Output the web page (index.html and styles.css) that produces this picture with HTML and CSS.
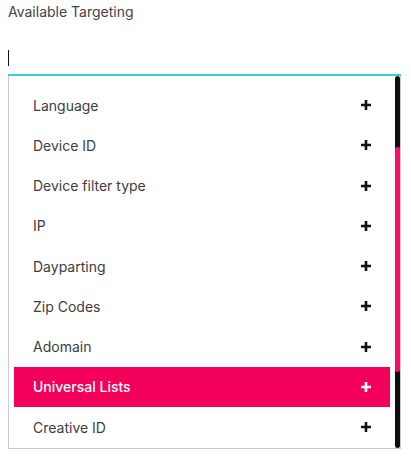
FILE: index.html
```html
<!DOCTYPE html>
<html lang="en">

<head>
    <meta charset="UTF-8">
    <meta name="viewport" content="width=device-width, initial-scale=1.0">
    <title>Available Targeting</title>
    <link rel="stylesheet" href="styles.css">
</head>

<body>
    <div class="targeting">
        <label class="targeting-label">Available Targeting</label>

        <div class="search-field">
            <span class="caret"></span>
        </div>

        <div class="dropdown">
            <ul class="options">
                <li class="option"><span>Language</span><svg class="plus" viewBox="0 0 10 10"><path d="M5 0V10M0 5H10"/></svg></li>
                <li class="option"><span>Device ID</span><svg class="plus" viewBox="0 0 10 10"><path d="M5 0V10M0 5H10"/></svg></li>
                <li class="option"><span>Device filter type</span><svg class="plus" viewBox="0 0 10 10"><path d="M5 0V10M0 5H10"/></svg></li>
                <li class="option"><span>IP</span><svg class="plus" viewBox="0 0 10 10"><path d="M5 0V10M0 5H10"/></svg></li>
                <li class="option"><span>Dayparting</span><svg class="plus" viewBox="0 0 10 10"><path d="M5 0V10M0 5H10"/></svg></li>
                <li class="option"><span>Zip Codes</span><svg class="plus" viewBox="0 0 10 10"><path d="M5 0V10M0 5H10"/></svg></li>
                <li class="option"><span>Adomain</span><svg class="plus" viewBox="0 0 10 10"><path d="M5 0V10M0 5H10"/></svg></li>
                <li class="option active"><span>Universal Lists</span><svg class="plus" viewBox="0 0 10 10"><path d="M5 0V10M0 5H10"/></svg></li>
                <li class="option"><span>Creative ID</span><svg class="plus" viewBox="0 0 10 10"><path d="M5 0V10M0 5H10"/></svg></li>
            </ul>
            <div class="scrollbar">
                <div class="thumb"></div>
            </div>
        </div>
    </div>
</body>

</html>
```

FILE: styles.css
```css
body {
    margin: 0;
    padding: 0 8px;
    font-family: 'Inter', 'Liberation Sans', sans-serif;
    font-size: 14px;
    color: #3d3d3d;
    background-color: #ffffff;
}

.targeting {
    width: 393px;
}

.targeting-label {
    display: block;
    margin-top: 3px;
    line-height: 17px;
    color: #444444;
}

.search-field {
    padding: 30px 0 8px 0;
    border-bottom: 2px solid #3ccfd0;
}

.caret {
    display: block;
    width: 1px;
    height: 16px;
    background-color: #111111;
}

.dropdown {
    display: flex;
    height: 372px;
    border: 1px solid #cccccc;
    border-top: none;
    overflow: hidden;
}

.options {
    flex: 1;
    list-style: none;
    margin: 0;
    padding: 9px 5px 0 5px;
}

.option {
    display: flex;
    align-items: center;
    justify-content: space-between;
    height: 40.25px;
    padding: 0 19px;
    color: #3d3d3d;
}

.option .plus {
    width: 10px;
    height: 10px;
    stroke: #111111;
    stroke-width: 2.6;
}

.option.active {
    background-color: #f2005a;
    color: #ffffff;
    font-weight: 500;
}

.option.active .plus {
    stroke: #ffffff;
}

.scrollbar {
    width: 5px;
    background-color: #0d0d0d;
    border-radius: 3px;
    padding-top: 71px;
    box-sizing: border-box;
}

.thumb {
    height: 225px;
    background-color: #ff0a6c;
    border-radius: 2px;
}
```
